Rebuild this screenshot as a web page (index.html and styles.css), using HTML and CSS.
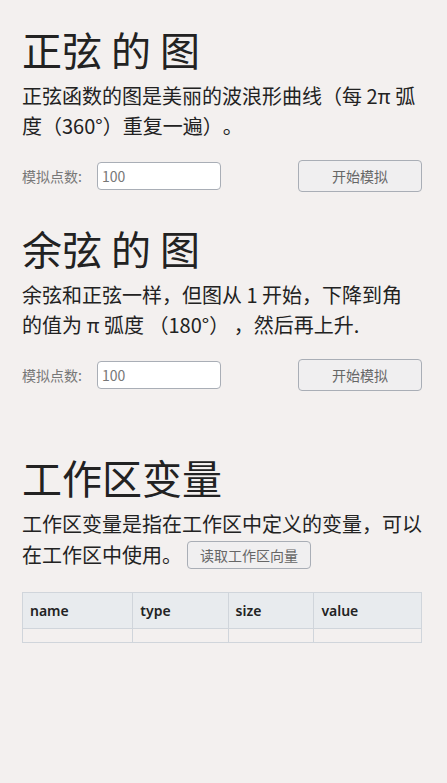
FILE: index.html
```html
<!DOCTYPE html>
<html lang="zh">
<head>
<meta charset="utf-8">
<title>正弦 的 图</title>
<link rel="stylesheet" href="styles.css">
</head>
<body>
<main class="page">
  <section class="section">
    <h1 class="title">正弦 的 图</h1>
    <p class="text">正弦函数的图是美丽的波浪形曲线（每 2π 弧度（360°）重复一遍）。</p>
    <div class="controls">
      <label class="label"><span>模拟点数:</span><input class="input" type="text" placeholder="100"></label>
      <button class="btn">开始模拟</button>
    </div>
  </section>
  <section class="section">
    <h1 class="title">余弦 的 图</h1>
    <p class="text">余弦和正弦一样，但图从 1 开始，下降到角的值为 π 弧度 （180°） ，然后再上升.</p>
    <div class="controls">
      <label class="label"><span>模拟点数:</span><input class="input" type="text" placeholder="100"></label>
      <button class="btn">开始模拟</button>
    </div>
  </section>
  <section class="section section-ws">
    <h1 class="title">工作区变量</h1>
    <div class="text ws-text">
      <span class="ws-line">工作区变量是指在工作区中定义的变量，可以</span>
      <div class="ws-row"><span>在工作区中使用。</span><button class="btn btn-small">读取工作区向量</button></div>
    </div>
    <table class="vars">
      <thead>
        <tr><th class="c1">name</th><th class="c2">type</th><th class="c3">size</th><th class="c4">value</th></tr>
      </thead>
      <tbody>
        <tr><td></td><td></td><td></td><td></td></tr>
      </tbody>
    </table>
  </section>
</main>
</body>
</html>
```
FILE: styles.css
```css
html, body {
  margin: 0;
  padding: 0;
  background: #f3f0ef;
}
body {
  font-family: "Noto Sans CJK SC", "Noto Sans", sans-serif;
  color: #222;
  text-spacing-trim: space-all;
}
.page {
  padding: 25px 25px 0 22px;
  display: flex;
  flex-direction: column;
  gap: 32px;
}
.section {
  display: flex;
  flex-direction: column;
}
.section-ws {
  margin-top: 30px;
}
.title {
  margin: 0;
  font-size: 40px;
  font-weight: 400;
  line-height: 48px;
}
.text {
  margin: 8px 0 0;
  font-size: 20px;
  line-height: 30px;
}
.ws-line {
  display: block;
}
.ws-row {
  display: flex;
  align-items: center;
  gap: 5px;
  min-height: 32px;
}
.controls {
  margin-top: 19px;
  display: flex;
  justify-content: space-between;
  align-items: center;
}
.label {
  font-size: 14px;
  color: #777;
  display: flex;
  align-items: center;
  gap: 15px;
}
.input {
  width: 124px;
  height: 28px;
  box-sizing: border-box;
  border: 1px solid #a9aeb6;
  border-radius: 4px;
  background: #fff;
  padding: 0 4px;
  font-family: "Noto Sans CJK SC", sans-serif;
  font-size: 14px;
  color: #333;
}
.input::placeholder {
  color: #777;
}
.btn {
  width: 124px;
  height: 32px;
  box-sizing: border-box;
  border: 1px solid #a9aeb6;
  border-radius: 4px;
  background: #f0eff0;
  font-family: "Noto Sans CJK SC", sans-serif;
  font-size: 14px;
  color: #666;
  padding: 0;
}
.btn-small {
  height: 28px;
}
.vars {
  margin-top: 21px;
  width: 400px;
  border-collapse: collapse;
  font-family: "Noto Sans", "Noto Sans CJK SC", sans-serif;
  font-size: 14px;
}
.vars th, .vars td {
  border: 1px solid #d0d5db;
  text-align: left;
}
.vars th {
  background: #e8ebee;
  font-weight: 600;
  height: 35px;
  padding: 0 7px;
  color: #222;
}
.vars td {
  height: 13px;
  padding: 0;
}
.c1 { width: 112px; }
.c2 { width: 95px; }
.c3 { width: 84px; }
.c4 { width: 109px; }
```
